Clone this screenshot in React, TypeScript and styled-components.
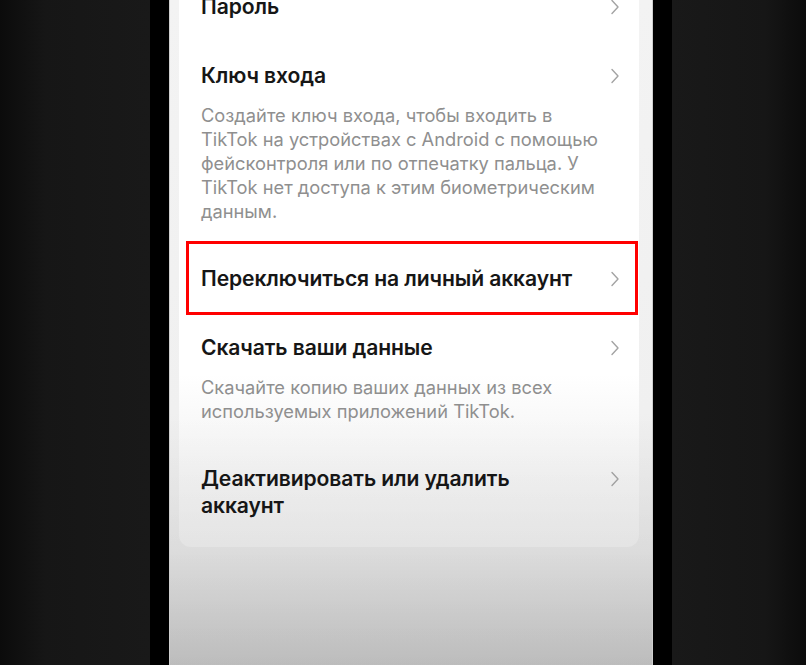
import React from "react";
import styled, { createGlobalStyle } from "styled-components";

const GlobalStyle = createGlobalStyle`
  html, body {
    margin: 0;
    padding: 0;
    background: #141414;
  }
  body {
    font-family: "Inter", "Noto Sans", sans-serif;
    -webkit-font-smoothing: antialiased;
  }
`;

type Item = {
  title: string;
  desc?: string;
  highlighted?: boolean;
};

const items: Item[] = [
  { title: "Пароль" },
  {
    title: "Ключ входа",
    desc: "Создайте ключ входа, чтобы входить в TikTok на устройствах с Android с помощью фейсконтроля или по отпечатку пальца. У TikTok нет доступа к этим биометрическим данным.",
  },
  { title: "Переключиться на личный аккаунт", highlighted: true },
  {
    title: "Скачать ваши данные",
    desc: "Скачайте копию ваших данных из всех используемых приложений TikTok.",
  },
  { title: "Деактивировать или удалить аккаунт" },
];

function Chevron() {
  return (
    <ChevronIcon viewBox="0 0 10 16" width="10" height="16">
      <path d="M2 1.5 L8 8 L2 14.5" fill="none" stroke="currentColor" strokeWidth="1.4" strokeLinecap="round" strokeLinejoin="round" />
    </ChevronIcon>
  );
}

export default function App() {
  return (
    <>
      <GlobalStyle />
      <Page>
        <Side $dir="left" />
        <Bezel />
        <Screen>
          <Card>
            {items.map((item) => (
              <Row key={item.title}>
                <RowHead>
                  <Title>{item.title}</Title>
                  <Chevron />
                </RowHead>
                {item.desc && <Desc>{item.desc}</Desc>}
                {item.highlighted && <Highlight />}
              </Row>
            ))}
          </Card>
        </Screen>
        <Bezel />
        <Side $dir="right" />
      </Page>
    </>
  );
}

const Page = styled.div`
  display: flex;
  height: 665px;
  overflow: hidden;
`;

const Side = styled.div<{ $dir: "left" | "right" }>`
  flex: ${(p) => (p.$dir === "left" ? "0 0 150px" : "1")};
  background: linear-gradient(
    ${(p) => (p.$dir === "left" ? "to right" : "to left")},
    #0b0b0b 0%,
    #161616 30%,
    #191919 100%
  );
`;

const Bezel = styled.div`
  width: 19px;
  flex: none;
  background: #000;
`;

const Screen = styled.div`
  position: relative;
  width: 484px;
  flex: none;
  box-sizing: border-box;
  background: linear-gradient(to bottom, #f3f3f3 0%, #f0f0f0 62%, #e3e3e3 83%, #c8c8c8 100%);
  border-left: 1px solid #cfcfcf;
  border-right: 1px solid #cfcfcf;
  padding: 0 13px 0 9px;
  overflow: hidden;

  &::after {
    content: "";
    position: absolute;
    inset: 0;
    pointer-events: none;
    background: linear-gradient(to bottom, rgba(0, 0, 0, 0) 62%, rgba(0, 0, 0, 0.06) 100%);
  }
`;

const Card = styled.div`
  margin-top: -28px;
  background: linear-gradient(to bottom, #ffffff 0%, #ffffff 70%, #f1f1f1 88%, #ebebeb 100%);
  border-radius: 12px;
  padding-bottom: 7px;
`;

const Row = styled.div`
  position: relative;
  padding: 21px 19px 21px 22px;
`;

const RowHead = styled.div`
  display: flex;
  align-items: flex-start;
  justify-content: space-between;
  gap: 20px;
`;

const Title = styled.div`
  font-size: 21.1px;
  line-height: 27px;
  font-weight: 600;
  color: #161616;
  max-width: 380px;
  letter-spacing: -0.1px;
`;

const ChevronIcon = styled.svg`
  flex: none;
  margin-top: 6px;
  color: #a3a3a3;
`;

const Desc = styled.div`
  margin-top: 14px;
  font-size: 18.3px;
  line-height: 24px;
  color: #8f8f8f;
  max-width: 402px;
`;

const Highlight = styled.div`
  position: absolute;
  left: 7px;
  right: 1px;
  top: -3px;
  bottom: -2px;
  border: 3px solid #ff0000;
`;
